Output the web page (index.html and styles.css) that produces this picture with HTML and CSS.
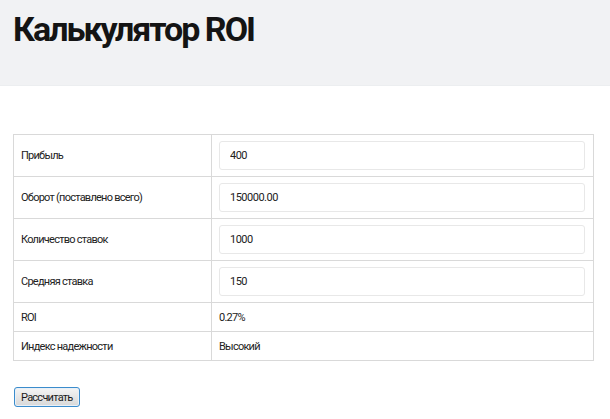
FILE: index.html
```html
<!DOCTYPE html>
<html lang="ru">
<head>
<meta charset="utf-8">
<title>Калькулятор ROI</title>
<link rel="stylesheet" href="styles.css">
</head>
<body>
<header class="page-header">
  <h1 class="title">Калькулятор ROI</h1>
</header>
<main class="content">
  <table class="calc">
    <tr class="row-input">
      <td class="label">Прибыль</td>
      <td class="value"><input class="field" type="text" value="400"></td>
    </tr>
    <tr class="row-input">
      <td class="label">Оборот (поставлено всего)</td>
      <td class="value"><input class="field" type="text" value="150000.00"></td>
    </tr>
    <tr class="row-input">
      <td class="label">Количество ставок</td>
      <td class="value"><input class="field" type="text" value="1000"></td>
    </tr>
    <tr class="row-input">
      <td class="label">Средняя ставка</td>
      <td class="value"><input class="field" type="text" value="150"></td>
    </tr>
    <tr class="row-text">
      <td class="label">ROI</td>
      <td class="value">0.27%</td>
    </tr>
    <tr class="row-text">
      <td class="label">Индекс надежности</td>
      <td class="value">Высокий</td>
    </tr>
  </table>
  <button class="btn" type="button">Рассчитать</button>
</main>
</body>
</html>
```

FILE: styles.css
```css
html, body {
  margin: 0;
  padding: 0;
  background: #ffffff;
}
body {
  font-family: Roboto, "Liberation Sans", sans-serif;
  color: #222222;
  font-size: 11px;
  letter-spacing: -0.75px;
}
.page-header {
  background: #f1f2f4;
  height: 86px;
  padding: 0 13px;
  box-sizing: border-box;
  border-bottom: 1px solid #eceef0;
}
.title {
  margin: 0;
  padding-top: 9px;
  font-size: 34px;
  line-height: 40px;
  font-weight: 700;
  color: #141414;
  letter-spacing: -2px;
}
.content {
  padding: 48px 13px 0 13px;
}
.calc {
  width: 581px;
  border-collapse: collapse;
  border: 1px solid #d9d9d9;
}
.calc td {
  border: 1px solid #d9d9d9;
  padding: 0 7px;
  vertical-align: middle;
}
.calc td.label {
  width: 183px;
}
.row-input td {
  height: 41px;
}
.row-text td {
  height: 28px;
}
.field {
  display: block;
  box-sizing: border-box;
  width: 366px;
  height: 29px;
  border: 1px solid #e8e8e8;
  border-radius: 3px;
  padding: 0 10px;
  font-family: Roboto, "Liberation Sans", sans-serif;
  font-size: 11px;
  letter-spacing: -0.5px;
  color: #222222;
  background: #ffffff;
  outline: none;
}
.btn {
  margin-top: 26px;
  margin-left: 1px;
  height: 20px;
  padding: 0 6px;
  font-family: Roboto, "Liberation Sans", sans-serif;
  font-size: 11px;
  letter-spacing: -0.75px;
  color: #1a1a1a;
  border: 1px solid #3b8ccc;
  border-radius: 3px;
  background: linear-gradient(#f4f4f4, #d8d8d8);
  box-shadow: inset 0 0 0 1px #e8f0f8;
}
```
